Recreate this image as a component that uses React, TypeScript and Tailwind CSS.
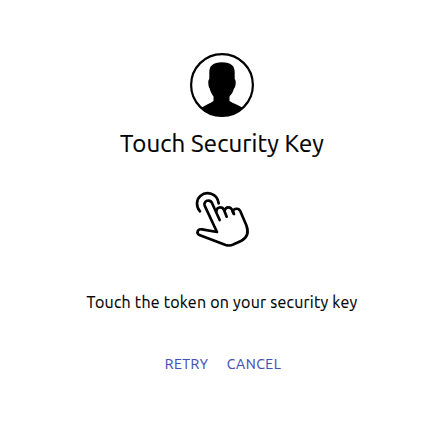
function Avatar() {
  return (
    <svg className="block h-16 w-16" viewBox="0 0 64 64" fill="none">
      <defs>
        <clipPath id="avatar-circle">
          <circle cx="32" cy="32" r="31.5" />
        </clipPath>
      </defs>
      <path
        clipPath="url(#avatar-circle)"
        fill="#000"
        d="M23.500 48V43.500C21.500 41 20.300 38 19.700 35.500C18.700 34.500 18.300 32 18.300 29.500C18.300 27.500 18.700 26.500 19.300 26V19C19.300 13 23 9.200 32 9.200C41 9.200 44.700 13 44.700 19V26C45.300 26.500 45.700 27.500 45.700 29.500C45.700 32 45.300 34.500 44 35.500C43.200 38.500 41.500 41.500 39.500 43.500V48C43 50.500 48.500 52 53 55V66H11V55C15.500 52 20 50.500 23.500 48Z"
      />
      <circle cx="32" cy="32" r="30.900" stroke="#000" strokeWidth="2.200" />
    </svg>
  );
}

function TouchHand() {
  return (
    <svg
      className="block h-[70px] w-[70px]"
      viewBox="0 0 210 210"
      fill="none"
      stroke="#000"
      strokeWidth="8"
      strokeLinecap="round"
      strokeLinejoin="round"
    >
      <path d="M42 82C30 69 30 47 43 36C60 21 94 26 98 58" />
      <path d="M101 108L78 57C72 44 51 50 56 65L93 144L48 136C34 134 29 149 42 154L119 183C128 186 135 185 143 181L165 171C183 162 189 145 181 124L163 82C158 70 144 73 140 83L143 89" />
      <path d="M91 82C92 69 108 66 114 78L122 98" />
      <path d="M116 80C119 67 134 67 139 79L144 90" />
    </svg>
  );
}

export default function App() {
  return (
    <main className="flex h-[437px] w-[444px] flex-col items-center bg-white pt-[53px] font-['Ubuntu','Noto_Sans',sans-serif] text-black">
      <Avatar />
      <h1 className="mt-[11px] h-8 whitespace-nowrap text-2xl leading-8 font-[430] tracking-[0.14px] [-webkit-text-stroke:0.2px]">
        Touch Security Key
      </h1>
      <div className="mt-[24px] mr-[2px]">
        <TouchHand />
      </div>
      <p className="mt-[36px] h-6 whitespace-nowrap text-base leading-6 tracking-[0.24px] [-webkit-text-stroke:0.15px]">
        Touch the token on your security key
      </p>
      <div className="mt-[32px] ml-[2px] flex gap-[18px] text-sm leading-9 text-[#3f51b5]">
        <button className="h-9 w-[44px] whitespace-nowrap tracking-[0.5px] [-webkit-text-stroke:0.15px]">RETRY</button>
        <button className="h-9 w-[55px] whitespace-nowrap tracking-[0.5px] [-webkit-text-stroke:0.15px]">CANCEL</button>
      </div>
    </main>
  );
}
